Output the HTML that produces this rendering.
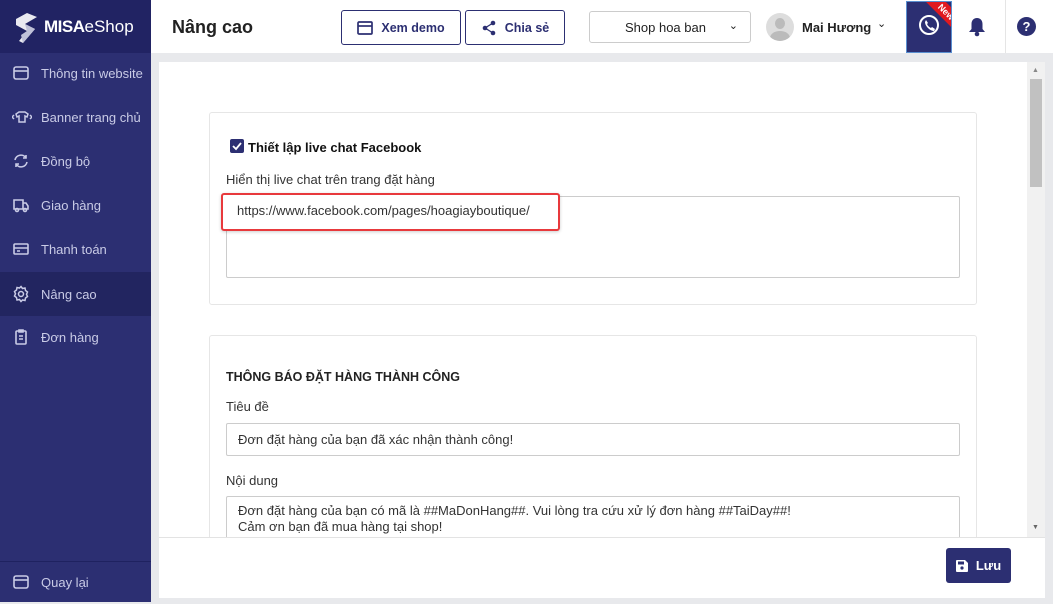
<!DOCTYPE html>
<html><head><meta charset="utf-8"><style>
*{box-sizing:border-box;margin:0;padding:0}
body{width:1053px;height:602px;overflow:hidden;font-family:"Liberation Sans",sans-serif;background:#e8e9ec;position:relative;color:#222}
.abs{position:absolute}
#side{left:0;top:0;width:151px;height:602px;background:#2c2f72}
#logo{left:0;top:0;width:151px;height:53px;background:#212363}
.mi{position:absolute;left:0;width:151px;height:44px;color:#c9cbe6;font-size:13px;display:flex;align-items:center;padding-left:41px}
.mi svg{position:absolute;left:12px;top:13px}
#hdr{left:151px;top:0;width:902px;height:53px;background:#fff}
.btn{position:absolute;top:10px;height:35px;border:1px solid #2c2f72;border-radius:3px;color:#2c2f72;font-size:12.5px;font-weight:bold;display:flex;align-items:center;justify-content:center;gap:8px}
#panel{left:159px;top:62px;width:886px;height:536px;background:#fff}
.card{position:absolute;background:#fff;border:1px solid #e6e6e6;border-radius:3px}
.inp{position:absolute;border:1px solid #ccc;border-radius:2px;font-size:13px;color:#333;padding:8px 11px;line-height:16px}
.lbl{position:absolute;font-size:13px;color:#333}
</style></head><body>
<div id="side" class="abs"></div>
<div id="logo" class="abs">
<svg class="abs" style="left:13px;top:11px" width="28" height="34" viewBox="0 0 28 34"><path d="M3 8 L14 2 L24 6 L12 13 L22 18 L10 32 L6 30 L14 20 L3 14Z" fill="#fff" opacity=".9"/><path d="M12 13 L22 18 L10 32 L8 24 L14 20Z" fill="#bfc1d8"/></svg>
<div class="abs" style="left:44px;top:17px;color:#fff;font-size:17px"><b style="letter-spacing:-0.5px">MISA</b>eShop</div>
</div>
<div class="mi" style="top:51px"><svg width="18" height="18" viewBox="0 0 18 18" fill="none" stroke="#c9cbe6" stroke-width="1.6"><rect x="2" y="3" width="14" height="12" rx="2"/><path d="M2 7h14"/></svg>Thông tin website</div>
<div class="mi" style="top:95px"><svg width="20" height="18" viewBox="0 0 20 18" fill="none" stroke="#c9cbe6" stroke-width="1.5"><path d="M7 4l-3 2 1 3 2-1v6h6V8l2 1 1-3-3-2h-6z"/><path d="M2 7L0 9l2 2M18 7l2 2-2 2"/></svg>Banner trang chủ</div>
<div class="mi" style="top:139px"><svg width="18" height="18" viewBox="0 0 18 18" fill="none" stroke="#c9cbe6" stroke-width="1.6"><path d="M3 8a6 6 0 0 1 11-2M15 10a6 6 0 0 1-11 2"/><path d="M14 3v3h-3M4 15v-3h3"/></svg>Đồng bộ</div>
<div class="mi" style="top:183px"><svg width="18" height="18" viewBox="0 0 18 18" fill="none" stroke="#c9cbe6" stroke-width="1.6"><path d="M2 4h9v9H2zM11 7h3l2 3v3h-5"/><circle cx="5" cy="14" r="1.5"/><circle cx="13" cy="14" r="1.5"/></svg>Giao hàng</div>
<div class="mi" style="top:227px"><svg width="18" height="18" viewBox="0 0 18 18" fill="none" stroke="#c9cbe6" stroke-width="1.6"><rect x="2" y="4" width="14" height="10" rx="1"/><path d="M2 8h14M5 11h3"/></svg>Thanh toán</div>
<div class="mi" style="top:272px;background:#222560"><svg width="18" height="18" viewBox="0 0 18 18" fill="none" stroke="#c9cbe6" stroke-width="1.5"><circle cx="9" cy="9" r="2.5"/><path d="M9 1.5l1.5 2 2.5-.5.5 2.5 2 1.5-1 2.3 1 2.2-2 1.5-.5 2.5-2.5-.5L9 16.5l-1.5-2-2.5.5-.5-2.5-2-1.5 1-2.2-1-2.3 2-1.5.5-2.5 2.5.5z"/></svg>Nâng cao</div>
<div class="mi" style="top:315px"><svg width="18" height="18" viewBox="0 0 18 18" fill="none" stroke="#c9cbe6" stroke-width="1.6"><rect x="4" y="3" width="10" height="13" rx="1"/><path d="M7 2h4v2H7zM7 8h4M7 11h4"/></svg>Đơn hàng</div>
<div class="abs" style="left:0;top:561px;width:151px;height:1px;background:#1f2260"></div>
<div class="mi" style="top:560px"><svg width="18" height="18" viewBox="0 0 18 18" fill="none" stroke="#c9cbe6" stroke-width="1.6"><rect x="2" y="3" width="14" height="12" rx="2"/><path d="M2 7h14"/></svg>Quay lại</div>

<div id="hdr" class="abs">
<div class="abs" style="left:21px;top:17px;font-size:18px;font-weight:bold;color:#222">Nâng cao</div>
<div class="btn" style="left:190px;width:120px"><svg width="16" height="14" viewBox="0 0 16 14" fill="none" stroke="#2c2f72" stroke-width="1.7"><rect x="1" y="1" width="14" height="12" rx="1"/><path d="M1 5h14"/></svg>Xem demo</div>
<div class="btn" style="left:314px;width:100px"><svg width="16" height="16" viewBox="0 0 16 16" fill="#2c2f72"><circle cx="12" cy="3" r="2.3"/><circle cx="4" cy="8" r="2.3"/><circle cx="12" cy="13" r="2.3"/><path d="M12 3L4 8l8 5" stroke="#2c2f72" stroke-width="1.3" fill="none"/></svg>Chia sẻ</div>
<div class="abs" style="left:438px;top:11px;width:162px;height:32px;border:1px solid #ccc;border-radius:3px;font-size:13px;color:#222;padding:8px 0 0 35px">Shop hoa ban<span style="position:absolute;right:12px;top:7px;font-size:11px">&#8964;</span></div>
<div class="abs" style="left:615px;top:13px;width:28px;height:28px;border-radius:50%;background:#ddd;overflow:hidden"><div style="position:absolute;left:9px;top:5px;width:10px;height:11px;border-radius:50%;background:#bbb"></div><div style="position:absolute;left:4px;top:18px;width:20px;height:14px;border-radius:50%;background:#bbb"></div></div>
<div class="abs" style="left:651px;top:20px;font-size:13px;font-weight:bold;color:#222">Mai Hương</div>
<div class="abs" style="left:726px;top:17px;font-size:11px">&#8964;</div>
<div class="abs" style="left:755px;top:1px;width:46px;height:52px;background:#2c2f72;border:1px solid #5a8fd0;overflow:hidden">
<svg class="abs" style="left:11px;top:12px" width="22" height="22" viewBox="0 0 22 22" fill="none" stroke="#fff" stroke-width="2"><circle cx="11" cy="11" r="9"/><path d="M8 6l2 3-1 1c1 2 2 3 4 4l1-1 3 2-1 2c-4 0-9-5-9-9z" fill="#fff" stroke-width="0"/></svg>
<div class="abs" style="left:15px;top:3px;width:48px;height:14px;background:#e0191f;transform:rotate(45deg);color:#fff;font-size:9px;font-weight:bold;text-align:center;line-height:14px">New</div>
</div>
<svg class="abs" style="left:817px;top:17px" width="18" height="20" viewBox="0 0 18 20" fill="#2c2f72"><path d="M9 1c-3.5 0-5.5 2.5-5.5 6v5L1 15h16l-2.5-3V7C14.5 3.5 12.5 1 9 1z"/><circle cx="9" cy="17" r="2.3"/></svg>
<div class="abs" style="left:854px;top:0;width:1px;height:53px;background:#e5e5e5"></div>
<div class="abs" style="left:866px;top:17px;width:19px;height:19px;border-radius:50%;background:#2c2f72;color:#fff;font-size:13px;font-weight:bold;text-align:center;line-height:19px">?</div>
</div>

<div id="panel" class="abs">
<div class="abs" style="left:868px;top:0;width:18px;height:475px;background:#f1f1f1"></div>
<div class="abs" style="left:871px;top:17px;width:12px;height:108px;background:#c1c1c1"></div>
<div class="abs" style="left:873px;top:5px;font-size:7px;color:#888">▲</div>
<div class="abs" style="left:873px;top:462px;font-size:7px;color:#666">▼</div>
<div class="card" style="left:50px;top:50px;width:768px;height:193px"></div>
<div class="abs" style="left:71px;top:77px;width:14px;height:14px;background:#2c2f72;border-radius:2px"><svg width="14" height="14" viewBox="0 0 14 14"><path d="M3 7l3 3 5-6" stroke="#fff" stroke-width="1.8" fill="none"/></svg></div>
<div class="abs" style="left:89px;top:78px;font-size:13px;font-weight:bold;color:#111">Thiết lập live chat Facebook</div>
<div class="lbl" style="left:67px;top:110px">Hiển thị live chat trên trang đặt hàng</div>
<div class="inp" style="left:67px;top:134px;width:734px;height:82px"></div>
<div class="abs" style="left:62px;top:131px;width:339px;height:38px;border:2px solid #e8393c;border-radius:3px;background:#fff;box-shadow:0 1px 3px rgba(0,0,0,.2)"></div>
<div class="abs" style="left:78px;top:141px;font-size:13px;color:#333">https://www.facebook.com/pages/hoagiayboutique/</div>
<div class="card" style="left:50px;top:273px;width:768px;height:220px"></div>
<div class="abs" style="left:67px;top:308px;font-size:12.5px;font-weight:bold;color:#222">THÔNG BÁO ĐẶT HÀNG THÀNH CÔNG</div>
<div class="lbl" style="left:67px;top:337px">Tiêu đề</div>
<div class="inp" style="left:67px;top:361px;width:734px;height:33px">Đơn đặt hàng của bạn đã xác nhận thành công!</div>
<div class="lbl" style="left:67px;top:411px">Nội dung</div>
<div class="inp" style="left:67px;top:434px;width:734px;height:60px;padding-top:6px">Đơn đặt hàng của bạn có mã là ##MaDonHang##. Vui lòng tra cứu xử lý đơn hàng ##TaiDay##!<br>Cảm ơn bạn đã mua hàng tại shop!</div>
<div class="abs" style="left:0;top:475px;width:886px;height:61px;background:#fff;border-top:1px solid #e3e3e3"></div>
<div class="abs" style="left:787px;top:486px;width:65px;height:35px;background:#2c2f72;border-radius:3px;color:#fff;font-size:13px;font-weight:bold;display:flex;align-items:center;justify-content:center;gap:8px"><svg width="12" height="12" viewBox="0 0 12 12" fill="#fff"><path d="M0 1a1 1 0 0 1 1-1h8l3 3v8a1 1 0 0 1-1 1H1a1 1 0 0 1-1-1z"/><rect x="2" y="1.5" width="6" height="3" fill="#2c2f72"/><circle cx="6" cy="8" r="1.6" fill="#2c2f72"/></svg>Lưu</div>
</div>
</body></html>
